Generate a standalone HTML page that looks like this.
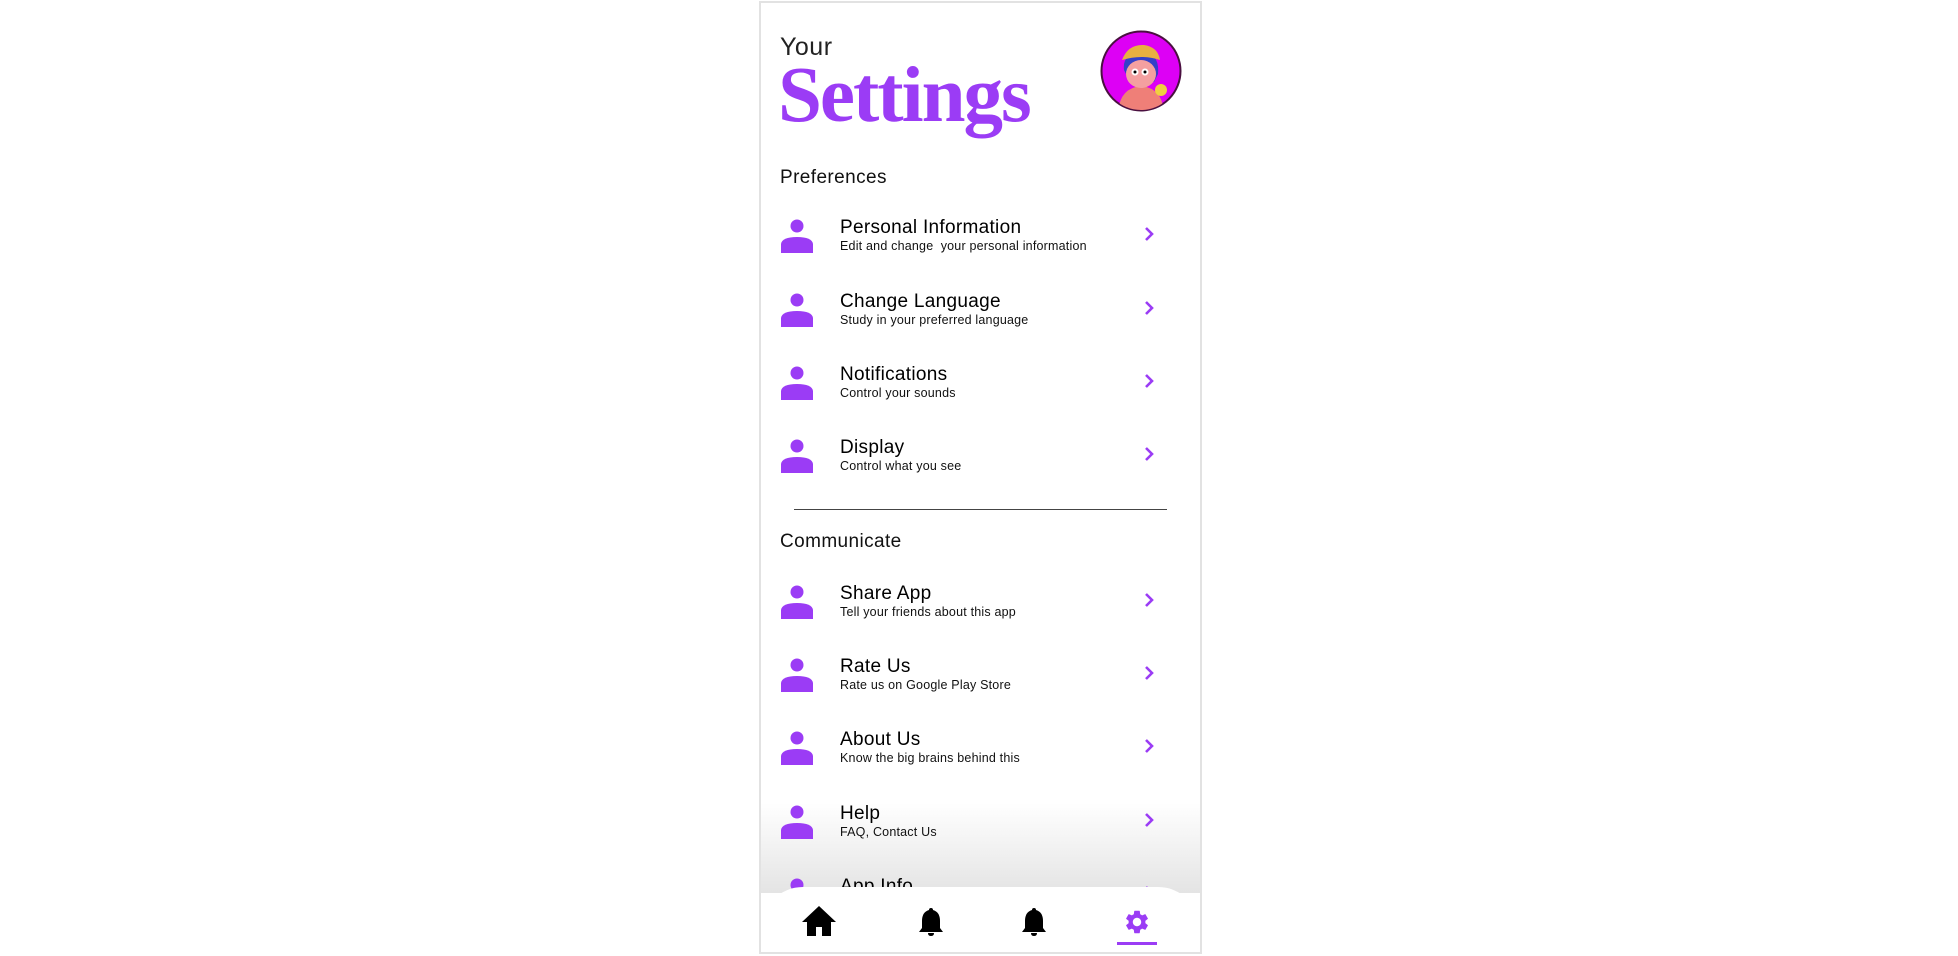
<!DOCTYPE html>
<html><head><meta charset="utf-8"><style>
*{margin:0;padding:0;box-sizing:border-box}
body{width:1958px;height:956px;background:#fff;position:relative;overflow:hidden;font-family:"Liberation Sans",sans-serif}
.frame{position:absolute;left:759px;top:1px;width:443px;height:953px;border:2px solid #e2e2e2;overflow:hidden;background:#fff}
.a{position:absolute}
.row{position:absolute;left:0;width:100%;height:60px}
.row svg.p{position:absolute;left:19px;top:0}
.row .t{position:absolute;left:79px;top:-2px;font-size:19px;color:#000;letter-spacing:.3px}
.row .s{position:absolute;left:79px;top:20px;font-size:12.5px;color:#111;letter-spacing:.2px}
.row svg.c{position:absolute;left:382px;top:7px}
</style></head><body>
<div class="frame">
<div class="a" style="left:19px;top:30px;font-size:25px;color:#222;letter-spacing:.5px">Your</div>
<div class="a" style="left:17px;top:53px;font-family:'Liberation Serif',serif;font-weight:bold;font-size:79px;color:#9b3cf5;letter-spacing:-2px;line-height:1">Settings</div>
<svg class="a" style="left:339px;top:27px" width="82" height="82" viewBox="0 0 82 82">
<defs><clipPath id="cc"><circle cx="41" cy="41" r="39"/></clipPath></defs>
<circle cx="41" cy="41" r="39.5" fill="#dd00f5" stroke="#4a1040" stroke-width="2"/>
<g clip-path="url(#cc)">
<path d="M18 82 Q20 58 41 56 Q62 58 64 82Z" fill="#ef7f78"/>
<path d="M24 40 Q22 24 40 22 Q60 22 58 44 L54 52 L30 52Z" fill="#3340c8"/>
<ellipse cx="41" cy="44" rx="15" ry="14" fill="#f4a0a0"/>
<path d="M22 30 Q28 14 44 15 Q58 17 60 30 Q42 24 22 30Z" fill="#e8b040"/>
<circle cx="35" cy="42" r="3.5" fill="#fff"/><circle cx="45" cy="42" r="3.5" fill="#fff"/>
<circle cx="35" cy="42" r="1.5" fill="#000"/><circle cx="45" cy="42" r="1.5" fill="#000"/>
<circle cx="61" cy="60" r="6" fill="#f0d040"/>
</g></svg>
<div class="a" style="left:19px;top:164px;font-size:19px;color:#111;letter-spacing:.4px">Preferences</div>
<div class="a" style="left:33px;top:506px;width:373px;height:1px;background:#444"></div>
<div class="a" style="left:19px;top:528px;font-size:19px;color:#111;letter-spacing:.4px">Communicate</div>

<div id="rows"></div>
<div class="a" style="left:0;top:800px;width:100%;height:90px;background:linear-gradient(rgba(225,225,225,0),rgba(225,225,225,.9))"></div>
<div id="rows2"></div>

<div class="a" style="left:0;top:884px;width:439px;height:80px;background:#fff;border-radius:42px 42px 0 0"></div>
<svg class="a" style="left:40px;top:902px" width="36" height="32" viewBox="0 0 36 32"><path d="M18 1 L35 17 L30 17 L30 31 L21 31 L21 22 L15 22 L15 31 L6 31 L6 17 L1 17Z" fill="#000"/></svg>
<svg class="a" style="left:157px;top:904px" width="26" height="30" viewBox="0 0 26 30"><path d="M13 1 Q15 1 15 3 Q22 5 22 14 L22 21 L25 25 L1 25 L4 21 L4 14 Q4 5 11 3 Q11 1 13 1Z M10 26 L16 26 Q16 29 13 29 Q10 29 10 26Z" fill="#000"/></svg>
<svg class="a" style="left:260px;top:904px" width="26" height="30" viewBox="0 0 26 30"><path d="M13 1 Q15 1 15 3 Q22 5 22 14 L22 21 L25 25 L1 25 L4 21 L4 14 Q4 5 11 3 Q11 1 13 1Z M10 26 L16 26 Q16 29 13 29 Q10 29 10 26Z" fill="#000"/></svg>
<svg class="a" style="left:362px;top:905px" width="28" height="28" viewBox="0 0 24 24"><path fill="#9b3cf5" d="M19.14 12.94c.04-.3.06-.61.06-.94 0-.32-.02-.64-.07-.94l2.03-1.58a.49.49 0 0 0 .12-.61l-1.920-3.32a.488.488 0 0 0-.59-.22l-2.39.96c-.5-.38-1.03-.7-1.62-.94l-.36-2.54a.484.484 0 0 0-.48-.41h-3.840c-.24 0-.43.17-.47.41l-.36 2.54c-.59.24-1.13.57-1.62.94l-2.39-.96c-.22-.08-.47 0-.59.22L2.74 8.87c-.12.21-.08.47.12.61l2.03 1.58c-.05.3-.09.63-.09.94s.02.64.07.94l-2.03 1.58a.49.49 0 0 0-.12.61l1.92 3.32c.12.22.37.29.59.22l2.39-.96c.5.38 1.03.7 1.62.94l.36 2.54c.05.24.24.41.48.41h3.84c.24 0 .44-.17.47-.41l.36-2.54c.59-.24 1.13-.56 1.62-.94l2.39.96c.22.08.47 0 .59-.22l1.92-3.32c.12-.22.07-.47-.12-.61l-2.010-1.58zM12 15.6c-1.98 0-3.6-1.62-3.6-3.6s1.62-3.6 3.6-3.6 3.6 1.62 3.6 3.6-1.62 3.6-3.6 3.6z"/></svg>
<div class="a" style="left:356px;top:939px;width:40px;height:3px;background:#9b3cf5"></div>
</div>
<script>
var P='<svg class="p" width="36" height="34" viewBox="0 0 36 34"><circle cx="17" cy="7" r="6.5" fill="#9b3cf5"/><path d="M1 34 L1 25 Q2 18 17 18 Q32 18 33 25 L33 34Z" fill="#9b3cf5"/></svg>';
var C='<svg class="c" width="12" height="16" viewBox="0 0 12 16"><path d="M3 2 L9 8 L3 14" stroke="#9b3cf5" stroke-width="2.6" fill="none"/></svg>';
function mk(list){return list.map(function(r){return '<div class="row" style="top:'+r[0]+'px">'+P+'<div class="t">'+r[1]+'</div><div class="s">'+r[2]+'</div>'+C+'</div>'}).join('')}
document.getElementById('rows').innerHTML=mk([[216,'Personal Information','Edit and change&nbsp; your personal information'],[290,'Change Language','Study in your preferred language'],[363,'Notifications','Control your sounds'],[436,'Display','Control what you see'],[582,'Share App','Tell your friends about this app'],[655,'Rate Us','Rate us on Google Play Store'],[728,'About Us','Know the big brains behind this']]);
document.getElementById('rows2').innerHTML=mk([[802,'Help','FAQ, Contact Us'],[875,'App Info','']]);
</script>
</body></html>
